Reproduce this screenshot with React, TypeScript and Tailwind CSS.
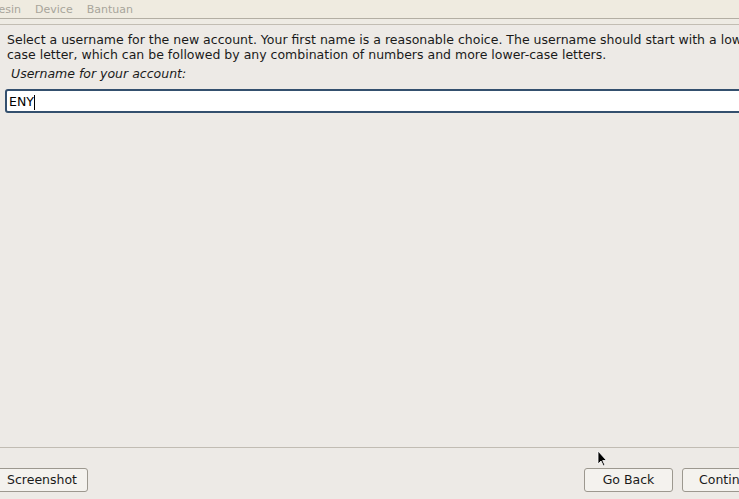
export default function App() {
    return (
        <div
            className="w-[739px] h-[499px] overflow-hidden bg-[#edeae6] flex flex-col relative"
            style={{ fontFamily: '"DejaVu Sans", sans-serif' }}
        >
            {/* menu bar */}
            <div className="h-[19px] bg-[#efebe0] border-b border-[#b3aea3] flex items-center pt-[2px] text-[11px] text-[#a8a59b] shrink-0">
                <span className="ml-[-11px]">Mesin</span>
                <span className="ml-[14px]">Device</span>
                <span className="ml-[14px]">Bantuan</span>
            </div>
            <div className="h-[6px] bg-[#eeebe4] border-b border-[#c2bdb3] shrink-0" />

            {/* content */}
            <div className="flex-1 flex flex-col">
                <p className="pl-[7px] pt-[7px] text-[12.5px] leading-[15px] text-[#1a1a1a] whitespace-nowrap">
                    Select a username for the new account. Your first name is a reasonable choice. The username should start with a lower-
                    <br />
                    case letter, which can be followed by any combination of numbers and more lower-case letters.
                </p>
                <p className="pl-[11px] mt-[4px] text-[12.5px] leading-[15px] italic text-[#1a1a1a]">
                    Username for your account:
                </p>
                <div className="ml-[5px] mt-[8px] h-[24px] w-[760px] bg-white border-2 border-[#34506e] rounded-[3px] flex items-center pl-[2px] pt-[3px] text-[12.5px] text-black">
                    ENY
                    <span className="inline-block w-px h-[15px] bg-black" />
                </div>
            </div>

            {/* bottom bar */}
            <div className="h-[52px] border-t border-[#c1bcb3] flex items-start pt-[20px] shrink-0">
                <button className="ml-[-4px] w-[92px] h-[24px] bg-[#f4f2ee] border border-[#9c988f] rounded-[3px] pt-[1px] text-[12.5px] text-[#1a1a1a]">
                    Screenshot
                </button>
                <div className="flex-1" />
                <button className="w-[89px] h-[24px] bg-[#f4f2ee] border border-[#9c988f] rounded-[3px] pt-[1px] text-[12.5px] text-[#1a1a1a]">
                    Go Back
                </button>
                <button className="ml-[9px] mr-[-30px] w-[87px] h-[24px] bg-[#f4f2ee] border border-[#9c988f] rounded-[3px] pt-[1px] text-[12.5px] text-[#1a1a1a] text-left pl-[16px]">
                    Continue
                </button>
            </div>

            {/* mouse pointer */}
            <svg className="absolute left-[597px] top-[450px]" width="12" height="18" viewBox="0 0 12 18">
                <path d="M1 1 L1 14 L4 11 L6.5 16 L8 15.3 L5.7 10.5 L9.5 10.5 Z" fill="#000" stroke="#fff" strokeWidth="0.8" />
            </svg>
        </div>
    )
}
